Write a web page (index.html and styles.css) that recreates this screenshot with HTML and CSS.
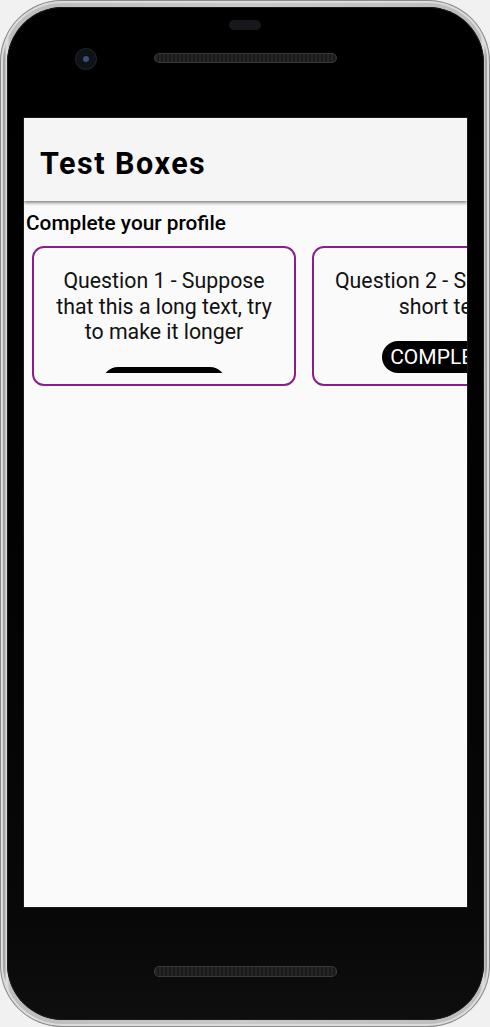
FILE: index.html
```html
<!DOCTYPE html>
<html lang="en">
<head>
<meta charset="utf-8">
<title>Test Boxes</title>
<link rel="stylesheet" href="styles.css">
</head>
<body>
<div class="phone">
  <div class="bezel">
    <div class="sensor"></div>
    <div class="camera"><div class="lens"></div></div>
    <div class="speaker speaker-top"></div>
    <div class="screen">
      <header class="appbar">
        <h1 class="title">Test Boxes</h1>
      </header>
      <p class="label">Complete your profile</p>
      <div class="cards">
        <div class="card">
          <div class="card-body">
            <p class="question">Question 1 - Suppose that this a long text, try to make it longer</p>
            <span class="btn">COMPLETE</span>
          </div>
        </div>
        <div class="card">
          <div class="card-body">
            <p class="question">Question 2 - Suppose a short text</p>
            <span class="btn">COMPLETE</span>
          </div>
        </div>
      </div>
    </div>
    <div class="speaker speaker-bottom"></div>
  </div>
</div>
</body>
</html>
```
FILE: styles.css
```css
html, body {
  margin: 0;
  padding: 0;
}
body {
  width: 490px;
  height: 1027px;
  overflow: hidden;
  background: #f1f1f1;
  font-family: Roboto, "Noto Sans", sans-serif;
}
.phone {
  box-sizing: border-box;
  width: 490px;
  height: 1027px;
  border-radius: 62px;
  padding: 7px 6px 7px 7px;
  background: linear-gradient(90deg, #cfcfcf 0%, #9a9a9a 0.8%, #e4e4e4 1.4%, #bcbcbc 2%, #c9c9c9 50%, #bcbcbc 98%, #e4e4e4 98.6%, #9a9a9a 99.2%, #cfcfcf 100%);
  box-shadow: inset 0 0 0 1px #8c8c8c, inset 0 0 0 3px #dcdcdc;
}
.bezel {
  position: relative;
  box-sizing: border-box;
  height: 1013px;
  border-radius: 56px;
  padding: 111px 17px 0 17px;
  background: linear-gradient(180deg, #000 0%, #020202 50%, #080808 90%, #0e0e0e 100%);
  box-shadow: inset 0 0 0 1px #1a1a1a;
}
.sensor {
  position: absolute;
  left: 222px;
  top: 13px;
  width: 32px;
  height: 10px;
  border-radius: 5px;
  background: #18181c;
}
.camera {
  position: absolute;
  left: 69px;
  top: 42px;
  width: 20px;
  height: 20px;
  border-radius: 50%;
  background: #10121a;
  box-shadow: 0 0 0 1px #1e2028;
  display: flex;
  align-items: center;
  justify-content: center;
}
.lens {
  width: 6px;
  height: 6px;
  border-radius: 50%;
  background: #3b4d72;
}
.speaker {
  position: absolute;
  left: 147px;
  width: 183px;
  height: 10px;
  box-sizing: border-box;
  border-radius: 5px;
  border: 1px solid #3a3a3a;
  background: repeating-linear-gradient(90deg, #262626 0 2px, #1a1a1a 2px 4px);
}
.speaker-top {
  top: 46px;
}
.speaker-bottom {
  top: 959px;
  height: 11px;
}
.screen {
  width: 443px;
  height: 789px;
  overflow: hidden;
  background: #fafafa;
  box-shadow: 0 0 0 1px #1a1a1a;
}
.appbar {
  position: relative;
  z-index: 1;
  box-sizing: border-box;
  height: 83px;
  padding: 7px 0 0 16px;
  display: flex;
  align-items: center;
  background: #f5f5f5;
  box-shadow: 0 2px 3px rgba(0, 0, 0, 0.45);
}
.title {
  margin: 0;
  font-size: 30.5px;
  font-weight: 700;
  letter-spacing: 1.5px;
  color: #000;
}
.label {
  margin: 0;
  padding: 11px 0 0 2px;
  font-size: 20.8px;
  line-height: 23px;
  font-weight: 500;
  color: #000;
}
.cards {
  display: flex;
  margin-top: 11px;
}
.card {
  flex: 0 0 auto;
  box-sizing: border-box;
  width: 264px;
  height: 140px;
  margin: 0 8px;
  padding: 20px 17px 11px;
  border: 2px solid #8a1f8c;
  border-radius: 12px;
}
.card-body {
  height: 105px;
  overflow: hidden;
  display: flex;
  flex-direction: column;
  align-items: center;
}
.question {
  margin: 0;
  font-size: 21.3px;
  line-height: 25.5px;
  text-align: center;
  color: #111;
}
.btn {
  margin-top: 22px;
  flex: 0 0 auto;
  height: 32px;
  line-height: 32px;
  padding: 0 8px;
  border-radius: 16px;
  background: #000;
  color: #fff;
  font-size: 21px;
}
```
